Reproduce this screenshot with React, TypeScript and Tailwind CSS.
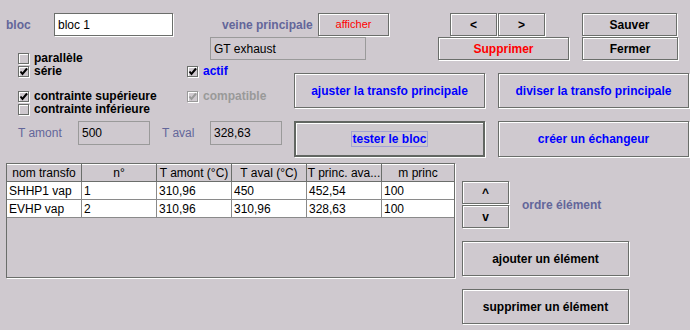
import type { ReactNode } from "react";

/* Swing "Metal" style form, hand laid out in flex rows */

const label = "text-[12px] font-bold text-[#63669a] whitespace-nowrap";

function Btn({
  className,
  children,
  focused,
}: {
  className: string;
  children: ReactNode;
  focused?: boolean;
}) {
  return (
    <div
      className={
        "flex items-center justify-center shrink-0 bg-[#cfc9cf] whitespace-nowrap " +
        (focused
          ? "border-2 border-[#626662] shadow-[1px_1px_0_#ffffff,inset_1px_1px_0_#ffffff] "
          : "border border-[#6b6e6b] shadow-[1px_1px_0_#ffffff,inset_1px_1px_0_#ffffff] ") +
        className
      }
    >
      {children}
    </div>
  );
}

function Field({
  className,
  children,
  editable,
}: {
  className: string;
  children: ReactNode;
  editable?: boolean;
}) {
  return (
    <div
      className={
        "flex items-center shrink-0 pl-[3px] text-[12px] text-black whitespace-nowrap " +
        (editable
          ? "bg-white border border-[#6b6e6b] shadow-[1px_1px_0_#ffffff] "
          : "border border-[#9a9a9a] ") +
        className
      }
    >
      {children}
    </div>
  );
}

function Check({
  checked,
  text,
  tone = "text-black",
  disabled,
}: {
  checked?: boolean;
  text: string;
  tone?: string;
  disabled?: boolean;
}) {
  return (
    <div className="flex items-center h-[13px] gap-[5px]">
      <div
        className={
          "w-[11px] h-[11px] shrink-0 flex items-center justify-center border shadow-[1px_1px_0_#ffffff,inset_1px_1px_0_#ffffff] " +
          (disabled ? "border-[#9a9a9a]" : "border-[#6b6e6b]")
        }
      >
        {checked && (
          <svg width="9" height="9" viewBox="0 0 9 9">
            <path
              d="M1.5 4.5 L3.5 7 L8 1.5"
              fill="none"
              stroke={disabled ? "#9a9a9a" : "#000000"}
              strokeWidth="2"
            />
          </svg>
        )}
      </div>
      <span className={"text-[12px] font-bold leading-[13px] whitespace-nowrap " + tone}>
        {text}
      </span>
    </div>
  );
}

const headers = ["nom transfo", "n°", "T amont (°C)", "T aval (°C)", "T princ. ava...", "m princ"];
const rows = [
  ["SHHP1 vap", "1", "310,96", "450", "452,54", "100"],
  ["EVHP vap", "2", "310,96", "310,96", "328,63", "100"],
];

export default function App() {
  return (
    <div className="w-[690px] h-[330px] bg-[#cfc9cf] overflow-hidden font-['Liberation_Sans',Arial,sans-serif] text-[12px]">
      {/* ── Row 1 ── */}
      <div className="flex items-center h-[23px] mt-[13px]">
        <span className={label + " w-[54px] pl-[6px]"}>bloc</span>
        <Field editable className="w-[119px] h-[23px]">
          bloc 1
        </Field>
        <span className={label + " ml-[49px] w-[96px]"}>veine principale</span>
        <Btn className="w-[71px] h-[23px] text-[11px] text-[#ff0000]">afficher</Btn>
        <Btn className="ml-[61px] w-[47px] h-[23px] font-bold">&lt;</Btn>
        <Btn className="ml-[1px] w-[47px] h-[23px] font-bold">&gt;</Btn>
        <Btn className="ml-[37px] w-[95px] h-[23px] font-bold">Sauver</Btn>
      </div>

      {/* ── Middle block ── */}
      <div className="flex mt-[1px]">
        <div className="w-[294px] shrink-0 flex flex-col">
          <div className="flex h-[28px]">
            <div className="w-[210px] shrink-0 pt-[15px] pl-[18px]">
              <Check text="parallèle" />
            </div>
            <Field className="w-[156px] h-[23px]">GT exhaust</Field>
          </div>
          <div className="flex">
            <div className="w-[187px] shrink-0 pl-[18px]">
              <Check checked text="série" />
            </div>
            <Check checked text="actif" tone="text-[#0000ff]" />
          </div>
          <div className="flex mt-[12px]">
            <div className="w-[187px] shrink-0 pl-[18px]">
              <Check checked text="contrainte supérieure" />
            </div>
            <Check checked disabled text="compatible" tone="text-[#999999]" />
          </div>
          <div className="pl-[18px]">
            <Check text="contrainte inférieure" />
          </div>
          <div className="flex items-center h-[24px] mt-[5px]">
            <span className={label + " w-[78px] pl-[18px] font-normal"}>T amont</span>
            <Field className="w-[72px] h-[24px]">500</Field>
            <span className={label + " w-[60px] pl-[12px] font-normal"}>T aval</span>
            <Field className="w-[72px] h-[24px]">328,63</Field>
          </div>
        </div>

        <div className="flex flex-col">
          <div className="flex">
            <Btn className="ml-[144px] w-[131px] h-[23px] font-bold text-[#ff0000]">Supprimer</Btn>
            <Btn className="ml-[13px] w-[96px] h-[23px] font-bold">Fermer</Btn>
          </div>
          <div className="flex mt-[13px]">
            <Btn className="w-[191px] h-[35px] font-bold text-[#0000ff]">ajuster la transfo principale</Btn>
            <Btn className="ml-[13px] w-[191px] h-[35px] font-bold text-[#0000ff]">diviser la transfo principale</Btn>
          </div>
          <div className="flex mt-[13px]">
            <Btn focused className="w-[191px] h-[36px] font-bold text-[#0000ff]">
              <span className="border border-[#a3a3d3] leading-[12px] py-[1px]">tester le bloc</span>
            </Btn>
            <Btn className="ml-[13px] w-[191px] h-[36px] font-bold text-[#0000ff]">créer un échangeur</Btn>
          </div>
        </div>
      </div>

      {/* ── Table + element controls ── */}
      <div className="flex mt-[6px]">
        <div className="ml-[6px] w-[449px] h-[115px] shrink-0 border border-[#6b6e6b] shadow-[1px_1px_0_#ffffff] flex flex-col">
          <div className="grid grid-cols-[75px_75px_75px_75px_75px_1fr] h-[18px] border-b border-[#6b6e6b] shadow-[inset_0_1px_0_#ffffff]">
            {headers.map((h, i) => (
              <div
                key={h}
                className={
                  "flex items-center justify-center text-[12px] text-black whitespace-nowrap overflow-hidden " +
                  (i < headers.length - 1 ? "border-r border-[#6b6e6b]" : "")
                }
              >
                {h}
              </div>
            ))}
          </div>
          {rows.map((r) => (
            <div
              key={r[0]}
              className="grid grid-cols-[75px_75px_75px_75px_75px_1fr] h-[18px] bg-white border-b border-[#8a8a8a]"
            >
              {r.map((c, i) => (
                <div
                  key={i}
                  className={
                    "flex items-center pl-[2px] text-[12px] text-black whitespace-nowrap " +
                    (i < r.length - 1 ? "border-r border-[#8a8a8a]" : "")
                  }
                >
                  {c}
                </div>
              ))}
            </div>
          ))}
        </div>

        <div className="ml-[7px] flex flex-col pt-[18px]">
          <div className="flex items-center">
            <div className="flex flex-col">
              <Btn className="w-[47px] h-[23px] font-bold">^</Btn>
              <Btn className="mt-[1px] w-[47px] h-[23px] font-bold">v</Btn>
            </div>
            <span className={label + " ml-[13px]"}>ordre élément</span>
          </div>
          <Btn className="mt-[13px] w-[167px] h-[35px] font-bold">ajouter un élément</Btn>
          <Btn className="mt-[13px] w-[167px] h-[35px] font-bold">supprimer un élément</Btn>
        </div>
      </div>
    </div>
  );
}
